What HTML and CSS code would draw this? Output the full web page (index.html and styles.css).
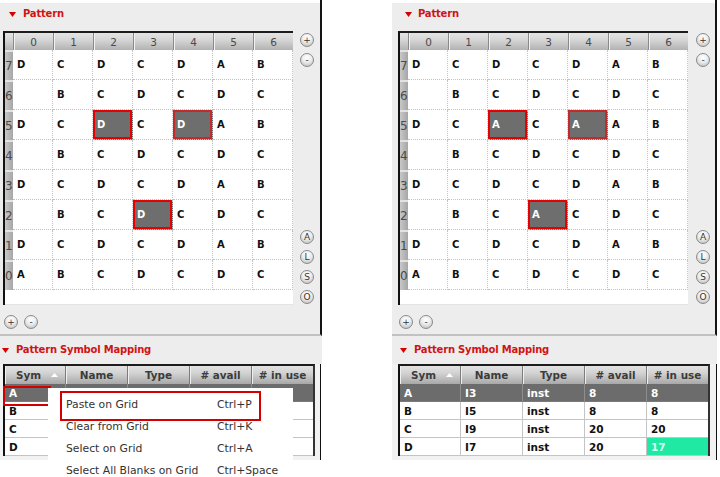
FILE: index.html
```html
<!DOCTYPE html>
<html>
<head>
<meta charset="utf-8">
<title>Pattern</title>
<link rel="stylesheet" href="styles.css">
</head>
<body>
<div class="page">

  <section class="panel panel-left">
    <div class="pattern">
      <div class="title"><svg class="tri" width="7" height="5" viewBox="0 0 7 5"><polygon points="0,0 7,0 3.5,5"/></svg><span>Pattern</span></div>
      <div class="pattern-body">
        <div class="grid-col">
          <div class="grid">
            <div class="corner"></div>
            <div class="colhead">0</div><div class="colhead">1</div><div class="colhead">2</div><div class="colhead">3</div><div class="colhead">4</div><div class="colhead">5</div><div class="colhead">6</div>

            <div class="rowhead">7</div><div class="cell">D</div><div class="cell">C</div><div class="cell">D</div><div class="cell">C</div><div class="cell">D</div><div class="cell">A</div><div class="cell">B</div>
            <div class="rowhead">6</div><div class="cell"></div><div class="cell">B</div><div class="cell">C</div><div class="cell">D</div><div class="cell">C</div><div class="cell">D</div><div class="cell">C</div>
            <div class="rowhead">5</div><div class="cell">D</div><div class="cell">C</div><div class="cell sel">D</div><div class="cell">C</div><div class="cell sel sel-dark">D</div><div class="cell">A</div><div class="cell">B</div>
            <div class="rowhead">4</div><div class="cell"></div><div class="cell">B</div><div class="cell">C</div><div class="cell">D</div><div class="cell">C</div><div class="cell">D</div><div class="cell">C</div>
            <div class="rowhead">3</div><div class="cell">D</div><div class="cell">C</div><div class="cell">D</div><div class="cell">C</div><div class="cell">D</div><div class="cell">A</div><div class="cell">B</div>
            <div class="rowhead">2</div><div class="cell"></div><div class="cell">B</div><div class="cell">C</div><div class="cell sel">D</div><div class="cell">C</div><div class="cell">D</div><div class="cell">C</div>
            <div class="rowhead">1</div><div class="cell">D</div><div class="cell">C</div><div class="cell">D</div><div class="cell">C</div><div class="cell">D</div><div class="cell">A</div><div class="cell">B</div>
            <div class="rowhead">0</div><div class="cell">A</div><div class="cell">B</div><div class="cell">C</div><div class="cell">D</div><div class="cell">C</div><div class="cell">D</div><div class="cell">C</div>
            <div class="grid-blank"></div>
          </div>
          <div class="grid-buttons"><span class="rbtn">+</span><span class="rbtn">-</span></div>
        </div>
        <div class="side">
          <span class="rbtn">+</span><span class="rbtn">-</span>
          <span class="rbtn gap-big">A</span><span class="rbtn">L</span><span class="rbtn">S</span><span class="rbtn">O</span>
        </div>
      </div>
    </div>

    <div class="mapping">
      <div class="title title-map"><svg class="tri" width="7" height="5" viewBox="0 0 7 5"><polygon points="0,0 7,0 3.5,5"/></svg><span>Pattern Symbol Mapping</span></div>
      <div class="table-wrap">
        <div class="table">
          <div class="th th-sym"><span>Sym</span><svg class="sort" width="7" height="4" viewBox="0 0 7 4"><polygon points="0,4 7,4 3.5,0"/></svg></div><div class="th">Name</div><div class="th">Type</div><div class="th"># avail</div><div class="th th-last"># in use</div>

          <div class="td selrow focus">A</div><div class="td selrow"></div><div class="td selrow"></div><div class="td selrow"></div><div class="td selrow td-last"></div>
          <div class="td">B</div><div class="td"></div><div class="td"></div><div class="td"></div><div class="td td-last"></div>
          <div class="td">C</div><div class="td"></div><div class="td"></div><div class="td"></div><div class="td td-last"></div>
          <div class="td">D</div><div class="td"></div><div class="td"></div><div class="td"></div><div class="td td-last"></div>
        </div>
      </div>
    </div>
  </section>

  <section class="panel panel-right">
    <div class="pattern">
      <div class="title"><svg class="tri" width="7" height="5" viewBox="0 0 7 5"><polygon points="0,0 7,0 3.5,5"/></svg><span>Pattern</span></div>
      <div class="pattern-body">
        <div class="grid-col">
          <div class="grid">
            <div class="corner"></div>
            <div class="colhead">0</div><div class="colhead">1</div><div class="colhead">2</div><div class="colhead">3</div><div class="colhead">4</div><div class="colhead">5</div><div class="colhead">6</div>

            <div class="rowhead">7</div><div class="cell">D</div><div class="cell">C</div><div class="cell">D</div><div class="cell">C</div><div class="cell">D</div><div class="cell">A</div><div class="cell">B</div>
            <div class="rowhead">6</div><div class="cell"></div><div class="cell">B</div><div class="cell">C</div><div class="cell">D</div><div class="cell">C</div><div class="cell">D</div><div class="cell">C</div>
            <div class="rowhead">5</div><div class="cell">D</div><div class="cell">C</div><div class="cell sel">A</div><div class="cell">C</div><div class="cell sel sel-dark">A</div><div class="cell">A</div><div class="cell">B</div>
            <div class="rowhead">4</div><div class="cell"></div><div class="cell">B</div><div class="cell">C</div><div class="cell">D</div><div class="cell">C</div><div class="cell">D</div><div class="cell">C</div>
            <div class="rowhead">3</div><div class="cell">D</div><div class="cell">C</div><div class="cell">D</div><div class="cell">C</div><div class="cell">D</div><div class="cell">A</div><div class="cell">B</div>
            <div class="rowhead">2</div><div class="cell"></div><div class="cell">B</div><div class="cell">C</div><div class="cell sel">A</div><div class="cell">C</div><div class="cell">D</div><div class="cell">C</div>
            <div class="rowhead">1</div><div class="cell">D</div><div class="cell">C</div><div class="cell">D</div><div class="cell">C</div><div class="cell">D</div><div class="cell">A</div><div class="cell">B</div>
            <div class="rowhead">0</div><div class="cell">A</div><div class="cell">B</div><div class="cell">C</div><div class="cell">D</div><div class="cell">C</div><div class="cell">D</div><div class="cell">C</div>
            <div class="grid-blank"></div>
          </div>
          <div class="grid-buttons"><span class="rbtn">+</span><span class="rbtn">-</span></div>
        </div>
        <div class="side">
          <span class="rbtn">+</span><span class="rbtn">-</span>
          <span class="rbtn gap-big">A</span><span class="rbtn">L</span><span class="rbtn">S</span><span class="rbtn">O</span>
        </div>
      </div>
    </div>

    <div class="mapping">
      <div class="title title-map"><svg class="tri" width="7" height="5" viewBox="0 0 7 5"><polygon points="0,0 7,0 3.5,5"/></svg><span>Pattern Symbol Mapping</span></div>
      <div class="table-wrap">
        <div class="table">
          <div class="th th-sym"><span>Sym</span><svg class="sort" width="7" height="4" viewBox="0 0 7 4"><polygon points="0,4 7,4 3.5,0"/></svg></div><div class="th">Name</div><div class="th">Type</div><div class="th"># avail</div><div class="th th-last"># in use</div>

          <div class="td selrow">A</div><div class="td selrow">I3</div><div class="td selrow">inst</div><div class="td selrow">8</div><div class="td selrow td-last">8</div>
          <div class="td">B</div><div class="td">I5</div><div class="td">inst</div><div class="td">8</div><div class="td td-last">8</div>
          <div class="td">C</div><div class="td">I9</div><div class="td">inst</div><div class="td">20</div><div class="td td-last">20</div>
          <div class="td">D</div><div class="td">I7</div><div class="td">inst</div><div class="td">20</div><div class="td td-last td-green">17</div>
        </div>
      </div>
    </div>
  </section>

  <div class="menu">
    <div class="menu-item marked"><span class="label">Paste on Grid</span><span>Ctrl+P</span></div>
    <div class="menu-item"><span class="label">Clear from Grid</span><span>Ctrl+K</span></div>
    <div class="menu-item"><span class="label">Select on Grid</span><span>Ctrl+A</span></div>
    <div class="menu-item"><span class="label">Select All Blanks on Grid</span><span>Ctrl+Space</span></div>
  </div>

</div>
</body>
</html>
```

FILE: styles.css
```css
* { box-sizing: border-box; }

html, body {
  margin: 0;
  padding: 0;
}

body {
  width: 720px;
  height: 477px;
  overflow: hidden;
  background: #ffffff;
  font-family: "DejaVu Sans", sans-serif;
  color: #111;
}

.page {
  position: relative;
  display: flex;
  align-items: flex-start;
  height: 477px;
}

.panel {
  display: flex;
  flex-direction: column;
}

.panel-left { width: 322px; }
.panel-right { width: 325px; margin-left: 70px; }

/* ---------- Pattern section ---------- */
.pattern {
  height: 336px;
  padding-top: 3px;
  background: linear-gradient(#ffffff 0, #ffffff 3px, #ededed 3px);
  border-right: 2px solid #141414;
  border-bottom: 2px solid #c2c2c2;
}

.title {
  display: flex;
  align-items: center;
  height: 28px;
  padding-bottom: 6px;
  font-size: 10px;
  font-weight: bold;
  letter-spacing: -0.2px;
  line-height: 12px;
  color: #d01414;
}

.tri { fill: #d40000; flex: none; }

.panel-left .pattern .title { padding-left: 9px; gap: 7px; }
.panel-right .pattern .title { padding-left: 13px; gap: 6px; }

.pattern-body {
  display: flex;
  align-items: flex-start;
}

.panel-left .pattern-body { padding-left: 3px; }
.panel-right .pattern-body { padding-left: 6px; }

.grid-col {
  display: flex;
  flex-direction: column;
}

.grid {
  display: grid;
  grid-template-columns: 8px repeat(7, 40px);
  grid-template-rows: 17px repeat(8, 30px) 15px;
  width: 290px;
  background: #ffffff;
  border-left: 2px solid #111;
  border-top: 2px solid #1c1c1c;
}

.corner,
.colhead {
  background: linear-gradient(#e4e4e4 0, #d6d6d6 40%, #b2b2b2 100%);
}

.colhead {
  display: flex;
  align-items: center;
  justify-content: center;
  font-size: 10.5px;
  color: #4a4a4a;
  border-left: 1px solid #8a8a8a;
  box-shadow: inset 1px 0 #f2f2f2;
}

.rowhead {
  display: flex;
  align-items: center;
  padding-left: 0;
  font-size: 12px;
  color: #4a4a4a;
  overflow: visible;
  white-space: nowrap;
  background: linear-gradient(to right, #c8c8c8, #a6a6a6);
  border-top: 2px solid #e2e2e2;
}

.cell {
  display: flex;
  align-items: center;
  padding-left: 4px;
  font-size: 10px;
  font-weight: bold;
  color: #111;
  border-right: 1px dotted #c2c2c2;
  border-bottom: 1px dotted #c2c2c2;
}

.cell.sel {
  background: #6e6e6e;
  color: #ffffff;
  box-shadow: inset 0 0 0 2px #e60000;
}

.cell.sel-dark {
  box-shadow: inset 0 0 0 2px #c42a2a;
}

.grid-blank {
  grid-column: 1 / -1;
  background: #ffffff;
  border-bottom: 1px solid #e4e4e4;
}

.grid-buttons {
  display: flex;
  gap: 6px;
  margin-top: 10px;
  padding-left: 1px;
}

.rbtn {
  display: flex;
  align-items: center;
  justify-content: center;
  width: 14px;
  height: 14px;
  border-radius: 50%;
  border: 1px solid #8a8a8a;
  background: radial-gradient(circle at 50% 30%, #ffffff 0, #ececec 45%, #b6b6b6 100%);
  font-size: 9px;
  line-height: 1;
  color: #333;
  flex: none;
}

.side {
  display: flex;
  flex-direction: column;
  gap: 6px;
  padding-top: 2px;
}

.panel-left .side { margin-left: 7px; }
.panel-right .side { margin-left: 8px; }

.side .gap-big { margin-top: 157px; }

/* ---------- Mapping section ---------- */
.mapping {
  display: flex;
  flex-direction: column;
}

.title-map {
  background: #ededed;
  padding-bottom: 0;
}

.panel-left .title-map { padding-left: 2px; gap: 7px; }
.panel-right .title-map { padding-left: 8px; gap: 7px; }

.table-wrap {
  background: #f2f2f2;
  border-right: 1px solid #111;
  padding-bottom: 4px;
}

.panel-left .table-wrap { width: 321px; padding-left: 3px; }
.panel-right .table-wrap { width: 325px; padding-left: 6px; }

.table {
  display: grid;
  grid-template-columns: 61px 62px 62px 62px 61px;
  grid-auto-rows: 18px;
  width: 312px;
  background: #ffffff;
  border-left: 2px solid #111;
  border-top: 2px solid #1c1c1c;
  border-right: 2px solid #333;
}

.th {
  display: flex;
  align-items: center;
  justify-content: center;
  font-size: 10.4px;
  font-weight: bold;
  color: #3c3c3c;
  background: linear-gradient(#e2e2e2 0, #d2d2d2 40%, #a8a8a8 100%);
  border-right: 1px solid #7c7c7c;
  box-shadow: inset 1px 0 #efefef;
}

.th-last { border-right: none; }

.th-sym { gap: 10px; padding-left: 4px; }
.sort { fill: #ffffff; }

.td {
  display: flex;
  align-items: center;
  padding-left: 4px;
  font-size: 10.5px;
  font-weight: bold;
  color: #111;
  border-right: 1px solid #c4c4c4;
  border-bottom: 1px solid #c4c4c4;
}

.td-last { border-right: none; }

.td.selrow {
  background: #6c6c6c;
  color: #ffffff;
  border-right-color: #8e8e8e;
  border-bottom-color: #7a7a7a;
}

.td.selrow.td-last { border-right: none; }

.td.focus { position: relative; }
.td.focus::after {
  content: "";
  position: absolute;
  left: -2px;
  top: 2px;
  width: 44px;
  height: 16px;
  border: 2px solid #d00000;
}

.td-green {
  background: #1fe9a2;
  color: #d6fff2;
}

/* ---------- Context menu ---------- */
.menu {
  position: absolute;
  left: 48px;
  top: 388px;
  width: 245px;
  padding-top: 5px;
  background: #ffffff;
}

.menu-item {
  display: flex;
  align-items: center;
  height: 22px;
  padding-left: 18px;
  font-size: 10.8px;
  color: #333;
  white-space: nowrap;
}

.menu-item .label { width: 151px; }

.menu-item.marked { position: relative; }
.menu-item.marked::after {
  content: "";
  position: absolute;
  left: 12px;
  top: -2px;
  width: 197px;
  height: 26px;
  border: 2px solid #d40000;
}
```
